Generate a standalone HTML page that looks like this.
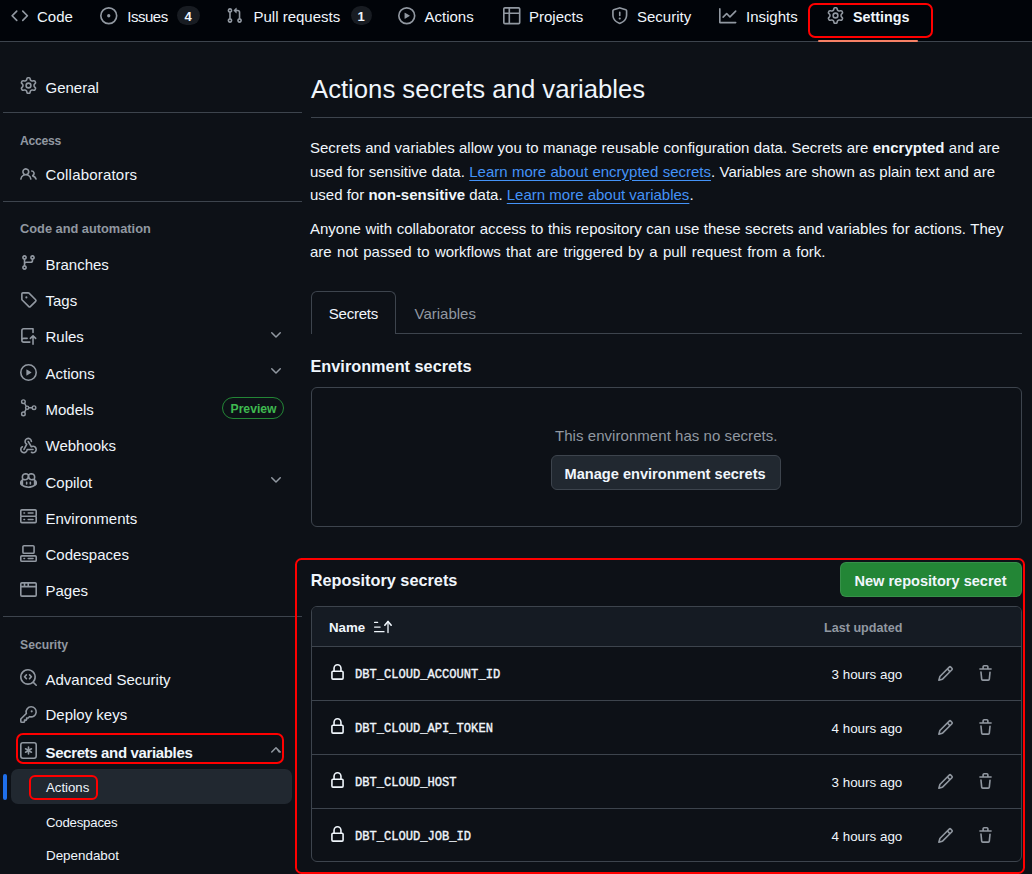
<!DOCTYPE html>
<html><head><meta charset="utf-8"><title>Actions secrets and variables</title>
<style>
html,body{margin:0;padding:0;}
body{width:1032px;height:874px;overflow:hidden;background:#0d1117;position:relative;font-family:"Liberation Sans",sans-serif;color:#f0f6fc;}
.t{position:absolute;line-height:1;white-space:nowrap;}
.t b{font-weight:700;}
.t u{text-decoration:underline;text-underline-offset:3px;text-decoration-thickness:1px;}
.i{position:absolute;overflow:visible;}
.b{position:absolute;}
</style></head><body>
<div class="b" style="left:0px;top:0px;width:1032px;height:41px;background:#010409"></div>
<div class="b" style="left:0px;top:41px;width:1032px;height:1px;background:#3d444d"></div>
<svg class="i" style="left:10.80px;top:7.00px;width:17.5px;height:17.5px;color:#9198a1;" viewBox="0 0 16 16" fill="currentColor"><path d="M4.72 3.22a.75.75 0 0 1 1.06 1.06L2.06 8l3.72 3.72a.75.75 0 1 1-1.06 1.06L.47 8.53a.75.75 0 0 1 0-1.06Zm6.56 0a.75.75 0 1 0-1.06 1.06L13.94 8l-3.72 3.72a.75.75 0 1 0 1.06 1.06l4.25-4.25a.75.75 0 0 0 0-1.06Z"/></svg>
<div class="t" style="left:37.00px;top:9.00px;font-size:15px;color:#f0f6fc;font-family:'Liberation Sans', sans-serif;">Code</div>
<svg class="i" style="left:99.80px;top:7.00px;width:17.5px;height:17.5px;color:#9198a1;" viewBox="0 0 16 16" fill="currentColor"><path d="M8 9.5a1.5 1.5 0 1 0 0-3 1.5 1.5 0 0 0 0 3Z"/><path d="M8 0a8 8 0 1 1 0 16A8 8 0 0 1 8 0ZM1.5 8a6.5 6.5 0 1 0 13 0 6.5 6.5 0 0 0-13 0Z"/></svg>
<div class="t" style="left:127.30px;top:9.00px;font-size:15px;color:#f0f6fc;font-family:'Liberation Sans', sans-serif;letter-spacing:-0.5px">Issues</div>
<div class="b" style="left:177px;top:6px;width:23px;height:19px;background:#181c22;border-radius:10px"></div>
<div class="t" style="left:184.50px;top:10.30px;font-size:13px;font-weight:700;color:#f0f6fc;font-family:'Liberation Sans', sans-serif;">4</div>
<svg class="i" style="left:225.80px;top:7.00px;width:17px;height:17px;color:#9198a1;" viewBox="0 0 16 16" fill="currentColor"><path d="M1.5 3.25a2.25 2.25 0 1 1 3 2.122v5.256a2.251 2.251 0 1 1-1.5 0V5.372A2.25 2.25 0 0 1 1.5 3.25Zm5.677-.177L9.573.677A.25.25 0 0 1 10 .854V2.5h1A2.5 2.5 0 0 1 13.5 5v5.628a2.251 2.251 0 1 1-1.5 0V5a1 1 0 0 0-1-1h-1v1.646a.25.25 0 0 1-.427.177L7.177 3.427a.25.25 0 0 1 0-.354ZM3.75 2.5a.75.75 0 1 0 0 1.5.75.75 0 0 0 0-1.5Zm0 9.5a.75.75 0 1 0 0 1.5.75.75 0 0 0 0-1.5Zm8.25.75a.75.75 0 1 0 1.5 0 .75.75 0 0 0-1.5 0Z"/></svg>
<div class="t" style="left:253.50px;top:9.00px;font-size:15px;color:#f0f6fc;font-family:'Liberation Sans', sans-serif;">Pull requests</div>
<div class="b" style="left:350.5px;top:6px;width:21px;height:19px;background:#181c22;border-radius:10px"></div>
<div class="t" style="left:357.50px;top:10.30px;font-size:13px;font-weight:700;color:#f0f6fc;font-family:'Liberation Sans', sans-serif;">1</div>
<svg class="i" style="left:397.80px;top:7.00px;width:17.5px;height:17.5px;color:#9198a1;" viewBox="0 0 16 16" fill="currentColor"><path d="M8 0a8 8 0 1 1 0 16A8 8 0 0 1 8 0ZM1.5 8a6.5 6.5 0 1 0 13 0 6.5 6.5 0 0 0-13 0Zm4.879-2.773 4.264 2.559a.25.25 0 0 1 0 .428l-4.264 2.559A.25.25 0 0 1 6 10.559V5.442a.25.25 0 0 1 .379-.215Z"/></svg>
<div class="t" style="left:424.50px;top:9.00px;font-size:15px;color:#f0f6fc;font-family:'Liberation Sans', sans-serif;">Actions</div>
<svg class="i" style="left:502.80px;top:7.00px;width:17.5px;height:17.5px;color:#9198a1;" viewBox="0 0 16 16" fill="currentColor"><path d="M0 1.75C0 .784.784 0 1.75 0h12.5C15.216 0 16 .784 16 1.75v12.5A1.75 1.75 0 0 1 14.25 16H1.75A1.75 1.75 0 0 1 0 14.25ZM6.5 6.5v8h7.75a.25.25 0 0 0 .25-.25V6.5Zm8-1.5V1.75a.25.25 0 0 0-.25-.25H6.5V5Zm-13 1.5v7.75c0 .138.112.25.25.25H5v-8ZM5 5V1.5H1.75a.25.25 0 0 0-.25.25V5Z"/></svg>
<div class="t" style="left:529.00px;top:9.00px;font-size:15px;color:#f0f6fc;font-family:'Liberation Sans', sans-serif;">Projects</div>
<svg class="i" style="left:610.80px;top:7.00px;width:17.5px;height:17.5px;color:#9198a1;" viewBox="0 0 16 16" fill="currentColor"><path d="M7.467.133a1.748 1.748 0 0 1 1.066 0l5.25 1.68A1.75 1.75 0 0 1 15 3.48V7c0 1.566-.32 3.182-1.303 4.682-.983 1.498-2.585 2.813-5.032 3.855a1.697 1.697 0 0 1-1.33 0c-2.447-1.042-4.049-2.357-5.032-3.855C1.32 10.182 1 8.566 1 7V3.48a1.755 1.755 0 0 1 1.217-1.667Zm.61 1.429a.25.25 0 0 0-.153 0l-5.25 1.68a.25.25 0 0 0-.174.238V7c0 1.358.275 2.666 1.057 3.86.784 1.194 2.121 2.34 4.366 3.297a.196.196 0 0 0 .154 0c2.245-.956 3.582-2.104 4.366-3.298C13.225 9.666 13.5 8.36 13.5 7V3.48a.251.251 0 0 0-.174-.237l-5.25-1.68ZM8.75 4.75v3a.75.75 0 0 1-1.5 0v-3a.75.75 0 0 1 1.5 0ZM9 10.5a1 1 0 1 1-2 0 1 1 0 0 1 2 0Z"/></svg>
<div class="t" style="left:637.00px;top:9.00px;font-size:15px;color:#f0f6fc;font-family:'Liberation Sans', sans-serif;">Security</div>
<svg class="i" style="left:718.80px;top:7.00px;width:17.5px;height:17.5px;color:#9198a1;" viewBox="0 0 16 16" fill="currentColor"><path d="M1.5 1.75V13.5h13.75a.75.75 0 0 1 0 1.5H.75a.75.75 0 0 1-.75-.75V1.75a.75.75 0 0 1 1.5 0Zm14.28 2.53-5.25 5.25a.75.75 0 0 1-1.06 0L7 7.06 4.28 9.78a.751.751 0 0 1-1.042-.018.751.751 0 0 1-.018-1.042l3.25-3.25a.75.75 0 0 1 1.06 0L10 7.94l4.72-4.72a.751.751 0 0 1 1.042.018.751.751 0 0 1 .018 1.042Z"/></svg>
<div class="t" style="left:746.00px;top:9.00px;font-size:15px;color:#f0f6fc;font-family:'Liberation Sans', sans-serif;">Insights</div>
<svg class="i" style="left:827.20px;top:7.20px;width:17px;height:17px;color:#9198a1;" viewBox="0 0 16 16" fill="currentColor"><path d="M8 0a8.2 8.2 0 0 1 .701.031C9.444.095 9.99.645 10.16 1.29l.288 1.107c.018.066.079.158.212.224.231.114.454.243.668.386.123.082.233.09.299.071l1.103-.303c.644-.176 1.392.021 1.82.63.27.385.506.792.704 1.218.315.675.111 1.422-.364 1.891l-.814.806c-.049.048-.098.147-.088.294.016.257.016.515 0 .772-.01.147.038.246.088.294l.814.806c.475.469.679 1.216.364 1.891a7.977 7.977 0 0 1-.704 1.217c-.428.61-1.176.807-1.82.63l-1.102-.302c-.067-.019-.177-.011-.3.071a5.909 5.909 0 0 1-.668.386c-.133.066-.194.158-.211.224l-.29 1.106c-.168.646-.715 1.196-1.458 1.26a8.006 8.006 0 0 1-1.402 0c-.743-.064-1.289-.614-1.458-1.26l-.289-1.106c-.018-.066-.079-.158-.212-.224a5.738 5.738 0 0 1-.668-.386c-.123-.082-.233-.09-.299-.071l-1.103.303c-.644.176-1.392-.021-1.82-.63a8.12 8.12 0 0 1-.704-1.218c-.315-.675-.111-1.422.363-1.891l.815-.806c.05-.048.098-.147.088-.294a6.214 6.214 0 0 1 0-.772c.01-.147-.038-.246-.088-.294l-.815-.806C.635 6.045.431 5.298.746 4.623a7.92 7.92 0 0 1 .704-1.217c.428-.61 1.176-.807 1.820-.63l1.102.302c.067.019.177.011.3-.071.214-.143.437-.272.668-.386.133-.066.194-.158.211-.224l.29-1.106C6.009.645 6.556.095 7.299.03 7.530.01 7.764 0 8 0Zm-.571 1.525c-.036.003-.108.036-.137.146l-.289 1.105c-.147.561-.549.967-.998 1.189-.173.086-.34.183-.5.29-.417.278-.97.423-1.529.27l-1.103-.303c-.109-.03-.175.016-.195.045-.22.312-.412.644-.573.99-.014.031-.021.11.059.19l.815.806c.411.406.562.957.53 1.456a4.709 4.709 0 0 0 0 .582c.032.499-.119 1.05-.53 1.456l-.815.806c-.081.08-.073.159-.059.19.162.346.353.677.573.989.02.03.085.076.195.046l1.102-.303c.56-.153 1.113-.008 1.53.27.161.107.328.204.501.29.447.222.85.629.997 1.189l.289 1.105c.029.109.101.143.137.146a6.6 6.6 0 0 0 1.142 0c.036-.003.108-.036.137-.146l.289-1.105c.147-.561.549-.967.998-1.189.173-.086.34-.183.5-.29.417-.278.97-.423 1.529-.27l1.103.303c.109.029.175-.016.195-.045.22-.313.411-.644.573-.99.014-.031.021-.11-.059-.19l-.815-.806c-.411-.406-.562-.957-.53-1.456a4.709 4.709 0 0 0 0-.582c-.032-.499.119-1.05.53-1.456l.815-.806c.081-.08.073-.159.059-.19a6.464 6.464 0 0 0-.573-.989c-.02-.03-.085-.076-.195-.046l-1.102.303c-.56.153-1.113.008-1.53-.27a4.44 4.44 0 0 0-.501-.29c-.447-.222-.85-.629-.997-1.189l-.289-1.105c-.029-.11-.101-.143-.137-.146a6.6 6.6 0 0 0-1.142 0ZM11 8a3 3 0 1 1-6 0 3 3 0 0 1 6 0ZM9.5 8a1.5 1.5 0 1 0-3.001.001A1.5 1.5 0 0 0 9.5 8Z"/></svg>
<div class="t" style="left:853.00px;top:9.60px;font-size:14.3px;font-weight:700;color:#f0f6fc;font-family:'Liberation Sans', sans-serif;">Settings</div>
<div class="b" style="left:818px;top:40px;width:100px;height:2px;background:#f78166;border-radius:1px"></div>
<div class="b" style="left:808.2px;top:3.2px;width:124.6px;height:35px;border:2.3px solid #f00;border-radius:7px;box-sizing:border-box"></div>
<svg class="i" style="left:19.70px;top:77.20px;width:17px;height:17px;color:#9198a1;" viewBox="0 0 16 16" fill="currentColor"><path d="M8 0a8.2 8.2 0 0 1 .701.031C9.444.095 9.99.645 10.16 1.29l.288 1.107c.018.066.079.158.212.224.231.114.454.243.668.386.123.082.233.09.299.071l1.103-.303c.644-.176 1.392.021 1.82.63.27.385.506.792.704 1.218.315.675.111 1.422-.364 1.891l-.814.806c-.049.048-.098.147-.088.294.016.257.016.515 0 .772-.01.147.038.246.088.294l.814.806c.475.469.679 1.216.364 1.891a7.977 7.977 0 0 1-.704 1.217c-.428.61-1.176.807-1.82.63l-1.102-.302c-.067-.019-.177-.011-.3.071a5.909 5.909 0 0 1-.668.386c-.133.066-.194.158-.211.224l-.29 1.106c-.168.646-.715 1.196-1.458 1.26a8.006 8.006 0 0 1-1.402 0c-.743-.064-1.289-.614-1.458-1.26l-.289-1.106c-.018-.066-.079-.158-.212-.224a5.738 5.738 0 0 1-.668-.386c-.123-.082-.233-.09-.299-.071l-1.103.303c-.644.176-1.392-.021-1.82-.63a8.12 8.12 0 0 1-.704-1.218c-.315-.675-.111-1.422.363-1.891l.815-.806c.05-.048.098-.147.088-.294a6.214 6.214 0 0 1 0-.772c.01-.147-.038-.246-.088-.294l-.815-.806C.635 6.045.431 5.298.746 4.623a7.92 7.92 0 0 1 .704-1.217c.428-.61 1.176-.807 1.820-.63l1.102.302c.067.019.177.011.3-.071.214-.143.437-.272.668-.386.133-.066.194-.158.211-.224l.29-1.106C6.009.645 6.556.095 7.299.03 7.530.01 7.764 0 8 0Zm-.571 1.525c-.036.003-.108.036-.137.146l-.289 1.105c-.147.561-.549.967-.998 1.189-.173.086-.34.183-.5.29-.417.278-.97.423-1.529.27l-1.103-.303c-.109-.03-.175.016-.195.045-.22.312-.412.644-.573.99-.014.031-.021.11.059.19l.815.806c.411.406.562.957.53 1.456a4.709 4.709 0 0 0 0 .582c.032.499-.119 1.05-.53 1.456l-.815.806c-.081.08-.073.159-.059.19.162.346.353.677.573.989.02.03.085.076.195.046l1.102-.303c.56-.153 1.113-.008 1.53.27.161.107.328.204.501.29.447.222.85.629.997 1.189l.289 1.105c.029.109.101.143.137.146a6.6 6.6 0 0 0 1.142 0c.036-.003.108-.036.137-.146l.289-1.105c.147-.561.549-.967.998-1.189.173-.086.34-.183.5-.29.417-.278.97-.423 1.529-.27l1.103.303c.109.029.175-.016.195-.045.22-.313.411-.644.573-.99.014-.031.021-.11-.059-.19l-.815-.806c-.411-.406-.562-.957-.53-1.456a4.709 4.709 0 0 0 0-.582c-.032-.499.119-1.05.53-1.456l.815-.806c.081-.08.073-.159.059-.19a6.464 6.464 0 0 0-.573-.989c-.02-.03-.085-.076-.195-.046l-1.102.303c-.56.153-1.113.008-1.53-.27a4.44 4.44 0 0 0-.501-.29c-.447-.222-.85-.629-.997-1.189l-.289-1.105c-.029-.11-.101-.143-.137-.146a6.6 6.6 0 0 0-1.142 0ZM11 8a3 3 0 1 1-6 0 3 3 0 0 1 6 0ZM9.5 8a1.5 1.5 0 1 0-3.001.001A1.5 1.5 0 0 0 9.5 8Z"/></svg>
<div class="t" style="left:45.50px;top:80.00px;font-size:15px;color:#f0f6fc;font-family:'Liberation Sans', sans-serif;">General</div>
<div class="b" style="left:3px;top:112px;width:299px;height:1px;background:#3d444d"></div>
<div class="t" style="left:20.00px;top:135.17px;font-size:12.2px;font-weight:700;color:#9198a1;font-family:'Liberation Sans', sans-serif;letter-spacing:-0.3px">Access</div>
<svg class="i" style="left:19.70px;top:166.00px;width:17px;height:17px;color:#9198a1;" viewBox="0 0 16 16" fill="currentColor"><path d="M2 5.5a3.5 3.5 0 1 1 5.898 2.549 5.508 5.508 0 0 1 3.034 4.084.75.75 0 1 1-1.482.235 4 4 0 0 0-7.9 0 .75.75 0 0 1-1.482-.236A5.507 5.507 0 0 1 3.102 8.05 3.493 3.493 0 0 1 2 5.5ZM11 4a3.001 3.001 0 0 1 2.22 5.018 5.01 5.01 0 0 1 2.56 3.012.749.749 0 0 1-.885.954.752.752 0 0 1-.549-.514 3.507 3.507 0 0 0-2.522-2.372.75.75 0 0 1-.574-.73v-.352a.75.75 0 0 1 .416-.672A1.5 1.5 0 0 0 11 5.5.75.75 0 0 1 11 4Zm-5.5-.5a2 2 0 1 0-.001 3.999A2 2 0 0 0 5.5 3.5Z"/></svg>
<div class="t" style="left:45.50px;top:167.00px;font-size:15px;color:#f0f6fc;font-family:'Liberation Sans', sans-serif;letter-spacing:0.2px">Collaborators</div>
<div class="b" style="left:3px;top:201px;width:299px;height:1px;background:#3d444d"></div>
<div class="t" style="left:20.00px;top:222.96px;font-size:12.8px;font-weight:700;color:#9198a1;font-family:'Liberation Sans', sans-serif;">Code and automation</div>
<svg class="i" style="left:19.70px;top:254.20px;width:17px;height:17px;color:#9198a1;" viewBox="0 0 16 16" fill="currentColor"><path d="M9.5 3.25a2.25 2.25 0 1 1 3 2.122V6A2.5 2.5 0 0 1 10 8.5H6a1 1 0 0 0-1 1v1.128a2.251 2.251 0 1 1-1.5 0V5.372a2.25 2.25 0 1 1 1.5 0v1.836A2.493 2.493 0 0 1 6 7h4a1 1 0 0 0 1-1v-.628A2.25 2.25 0 0 1 9.5 3.25Zm-6 0a.75.75 0 1 0 1.5 0 .75.75 0 0 0-1.5 0Zm8.25-.75a.75.75 0 1 0 0 1.5.75.75 0 0 0 0-1.5ZM4.25 12a.75.75 0 1 0 0 1.5.75.75 0 0 0 0-1.5Z"/></svg>
<div class="t" style="left:45.50px;top:256.70px;font-size:15px;color:#f0f6fc;font-family:'Liberation Sans', sans-serif;">Branches</div>
<svg class="i" style="left:19.70px;top:290.50px;width:17px;height:17px;color:#9198a1;" viewBox="0 0 16 16" fill="currentColor"><path d="M1 7.775V2.75C1 1.784 1.784 1 2.75 1h5.025c.464 0 .91.184 1.238.513l6.25 6.25a1.75 1.75 0 0 1 0 2.474l-5.026 5.026a1.75 1.75 0 0 1-2.474 0l-6.25-6.25A1.752 1.752 0 0 1 1 7.775Zm1.5 0c0 .066.026.13.073.177l6.25 6.25a.25.25 0 0 0 .354 0l5.025-5.025a.25.25 0 0 0 0-.354l-6.25-6.25a.25.25 0 0 0-.177-.073H2.75a.25.25 0 0 0-.25.25ZM6 5a1 1 0 1 1 0 2 1 1 0 0 1 0-2Z"/></svg>
<div class="t" style="left:45.50px;top:293.00px;font-size:15px;color:#f0f6fc;font-family:'Liberation Sans', sans-serif;">Tags</div>
<svg class="i" style="left:19.70px;top:327.50px;width:17px;height:17px;color:#9198a1;" viewBox="0 0 16 16" fill="currentColor"><path d="M1 2.5A2.5 2.5 0 0 1 3.5 0h8.75a.75.75 0 0 1 .75.75v3.5a.75.75 0 0 1-1.5 0V1.5h-8a1 1 0 0 0-1 1v6.708A2.493 2.493 0 0 1 3.5 9h3.25a.75.75 0 0 1 0 1.5H3.5a1 1 0 0 0 0 2h5.75a.75.75 0 0 1 0 1.5H3.5A2.5 2.5 0 0 1 1 11.5Zm13.23 7.79h-.001l-1.224-1.224v6.184a.75.75 0 0 1-1.5 0V9.066L10.28 10.29a.75.75 0 0 1-1.06-1.061l2.505-2.504a.75.75 0 0 1 1.06 0L15.29 9.23a.751.751 0 0 1-.018 1.042.751.751 0 0 1-1.042.018Z"/></svg>
<div class="t" style="left:45.50px;top:329.30px;font-size:15px;color:#f0f6fc;font-family:'Liberation Sans', sans-serif;">Rules</div>
<svg class="i" style="left:19.70px;top:363.50px;width:17px;height:17px;color:#9198a1;" viewBox="0 0 16 16" fill="currentColor"><path d="M8 0a8 8 0 1 1 0 16A8 8 0 0 1 8 0ZM1.5 8a6.5 6.5 0 1 0 13 0 6.5 6.5 0 0 0-13 0Zm4.879-2.773 4.264 2.559a.25.25 0 0 1 0 .428l-4.264 2.559A.25.25 0 0 1 6 10.559V5.442a.25.25 0 0 1 .379-.215Z"/></svg>
<div class="t" style="left:45.50px;top:365.60px;font-size:15px;color:#f0f6fc;font-family:'Liberation Sans', sans-serif;">Actions</div>
<svg class="i" style="left:19.70px;top:399.30px;width:17px;height:17px;color:#9198a1;" viewBox="0 0 16 16" fill="currentColor"><g fill="none" stroke="currentColor" stroke-width="1.35"><circle cx="3.2" cy="2.5" r="1.7"/><circle cx="3.2" cy="14" r="1.7"/><circle cx="13.2" cy="8.2" r="1.7"/><circle cx="6.7" cy="8.2" r="1.5"/><path d="M4.2 4 5.8 6.8M4.2 12.5 5.8 9.6M8.2 8.2h3.3"/></g></svg>
<div class="t" style="left:45.50px;top:401.90px;font-size:15px;color:#f0f6fc;font-family:'Liberation Sans', sans-serif;">Models</div>
<svg class="i" style="left:19.70px;top:437.00px;width:17px;height:17px;color:#9198a1;" viewBox="0 0 16 16" fill="currentColor"><path d="M5.5 4.25a2.25 2.25 0 0 1 4.5 0 .75.75 0 0 0 1.5 0 3.75 3.75 0 1 0-6.14 2.889l-2.272 4.258a.75.75 0 0 0 1.324.706L7 7.25a.75.75 0 0 0-.309-1.021A2.25 2.25 0 0 1 5.5 4.25Z"/><path d="M7.364 3.607a.75.75 0 0 1 1.03.257l2.608 4.349a3.75 3.75 0 1 1-.628 6.785.75.75 0 0 1 .752-1.299 2.25 2.25 0 1 0-.033-3.88.75.75 0 0 1-1.03-.256L7.107 4.636a.75.75 0 0 1 .257-1.03Z"/><path d="M2.9 8.776A.75.75 0 0 1 2.625 9.8 2.25 2.25 0 1 0 6 11.75a.75.75 0 0 1 .75-.751h5.5a.75.75 0 0 1 0 1.5H7.425a3.751 3.751 0 1 1-5.55-3.998.75.75 0 0 1 1.024.274Z"/></svg>
<div class="t" style="left:45.50px;top:438.20px;font-size:15px;color:#f0f6fc;font-family:'Liberation Sans', sans-serif;">Webhooks</div>
<svg class="i" style="left:19.70px;top:472.00px;width:17px;height:17px;color:#9198a1;" viewBox="0 0 16 16" fill="currentColor"><path d="M7.998 15.035c-4.562 0-7.873-2.914-7.998-3.749V9.338c.085-.628.677-1.686 1.588-2.065.013-.07.024-.143.036-.218.029-.183.06-.384.126-.612-.201-.508-.254-1.084-.254-1.656 0-.87.128-1.769.693-2.484.579-.733 1.494-1.124 2.724-1.261 1.206-.134 2.262.034 2.944.765.05.053.096.108.139.165.044-.057.094-.112.143-.165.682-.731 1.738-.899 2.944-.765 1.23.137 2.145.528 2.724 1.261.566.715.693 1.614.693 2.484 0 .572-.053 1.148-.254 1.656.066.228.098.429.126.612.012.076.024.148.037.218.924.385 1.522 1.471 1.591 2.095v1.872c0 .766-3.351 3.795-8.002 3.795Zm0-1.485c2.28 0 4.584-1.11 5.002-1.433V7.862l-.023-.116c-.49.21-1.075.291-1.727.291-1.146 0-2.059-.327-2.71-.991A3.222 3.222 0 0 1 8 6.303a3.24 3.240 0 0 1-.544.743c-.65.664-1.563.991-2.71.991-.652 0-1.236-.081-1.727-.291l-.023.116v4.255c.419.323 2.722 1.433 5.002 1.433ZM6.762 2.830c-.193-.206-.637-.413-1.682-.297-1.019.113-1.479.404-1.713.7-.247.312-.369.789-.369 1.554 0 .793.129 1.171.308 1.371.162.181.519.379 1.442.379.853 0 1.339-.235 1.638-.54.315-.322.527-.827.617-1.553.117-.935-.037-1.395-.241-1.614Zm4.155-.297c-1.044-.116-1.488.091-1.681.297-.204.219-.359.679-.242 1.614.091.726.303 1.231.618 1.553.299.305.784.54 1.638.54.922 0 1.280-.198 1.442-.379.179-.2.308-.578.308-1.371 0-.765-.123-1.242-.37-1.554-.233-.296-.693-.587-1.713-.7Z"/><path d="M6.250 9.037a.75.75 0 0 1 .75.75v1.501a.75.75 0 0 1-1.5 0V9.787a.75.75 0 0 1 .75-.75Zm4.250.75v1.501a.75.75 0 0 1-1.5 0V9.787a.75.75 0 0 1 1.5 0Z"/></svg>
<div class="t" style="left:45.50px;top:474.50px;font-size:15px;color:#f0f6fc;font-family:'Liberation Sans', sans-serif;">Copilot</div>
<svg class="i" style="left:19.70px;top:507.50px;width:17px;height:17px;color:#9198a1;" viewBox="0 0 16 16" fill="currentColor"><path d="M1.75 1h12.5c.966 0 1.75.784 1.75 1.75v4c0 .372-.116.717-.314 1 .198.283.314.628.314 1v4a1.75 1.75 0 0 1-1.75 1.75H1.75A1.75 1.75 0 0 1 0 12.75v-4c0-.358.109-.707.314-1a1.739 1.739 0 0 1-.314-1v-4C0 1.784.784 1 1.75 1ZM1.5 2.75v4c0 .138.112.25.25.25h12.5a.25.25 0 0 0 .25-.25v-4a.25.25 0 0 0-.25-.25H1.75a.25.25 0 0 0-.25.25Zm.25 5.75a.25.25 0 0 0-.25.25v4c0 .138.112.25.25.25h12.5a.25.25 0 0 0 .25-.25v-4a.25.25 0 0 0-.25-.25ZM7 4.75A.75.75 0 0 1 7.750 4h4.5a.75.75 0 0 1 0 1.5h-4.5A.75.75 0 0 1 7 4.75ZM7.75 10h4.5a.75.75 0 0 1 0 1.5h-4.5a.75.75 0 0 1 0-1.5ZM3 4.750A.75.75 0 0 1 3.75 4h.5a.75.75 0 0 1 0 1.5h-.5A.75.75 0 0 1 3 4.75ZM3.75 10h.5a.75.75 0 0 1 0 1.5h-.5a.75.75 0 0 1 0-1.5Z"/></svg>
<div class="t" style="left:45.50px;top:510.80px;font-size:15px;color:#f0f6fc;font-family:'Liberation Sans', sans-serif;">Environments</div>
<svg class="i" style="left:19.70px;top:544.80px;width:17px;height:17px;color:#9198a1;" viewBox="0 0 16 16" fill="currentColor"><path d="M0 11.25c0-.966.784-1.75 1.75-1.75h12.5c.966 0 1.75.784 1.75 1.75v3A1.75 1.75 0 0 1 14.25 16H1.75A1.75 1.75 0 0 1 0 14.25Zm2-9.5C2 .784 2.784 0 3.75 0h8.5C13.216 0 14 .784 14 1.75v5a1.75 1.75 0 0 1-1.75 1.75h-8.5A1.75 1.75 0 0 1 2 6.75Zm1.75-.25a.25.25 0 0 0-.25.25v5c0 .138.112.25.25.25h8.5a.25.25 0 0 0 .25-.25v-5a.25.25 0 0 0-.25-.25Zm-2 9.5a.25.25 0 0 0-.25.25v3c0 .138.112.25.25.25h12.5a.25.25 0 0 0 .25-.25v-3a.25.25 0 0 0-.25-.25Z"/><path d="M7 12.75a.75.75 0 0 1 .75-.75h4.5a.75.75 0 0 1 0 1.5h-4.5a.75.75 0 0 1-.75-.75Zm-4 0a.75.75 0 0 1 .75-.75h.5a.75.75 0 0 1 0 1.5h-.5a.75.75 0 0 1-.75-.75Z"/></svg>
<div class="t" style="left:45.50px;top:547.10px;font-size:15px;color:#f0f6fc;font-family:'Liberation Sans', sans-serif;">Codespaces</div>
<svg class="i" style="left:19.70px;top:580.70px;width:17px;height:17px;color:#9198a1;" viewBox="0 0 16 16" fill="currentColor"><path d="M0 2.75C0 1.784.784 1 1.75 1h12.5c.966 0 1.75.784 1.75 1.75v10.5A1.75 1.75 0 0 1 14.25 15H1.75A1.75 1.75 0 0 1 0 13.25ZM14.5 6h-13v7.25c0 .138.112.25.25.25h12.5a.25.25 0 0 0 .25-.25Zm-6-3.5v2h6V2.75a.25.25 0 0 0-.25-.25ZM5 2.5v2h2v-2Zm-3.25 0a.25.25 0 0 0-.25.25V4.5h2v-2Z"/></svg>
<div class="t" style="left:45.50px;top:583.40px;font-size:15px;color:#f0f6fc;font-family:'Liberation Sans', sans-serif;">Pages</div>
<svg class="i" style="left:268.00px;top:327.00px;width:16px;height:16px;color:#9198a1;" viewBox="0 0 16 16" fill="currentColor"><path d="M12.78 5.22a.749.749 0 0 1 0 1.06l-4.25 4.25a.749.749 0 0 1-1.06 0L3.22 6.28a.749.749 0 0 1 .018-1.042.749.749 0 0 1 1.042-.018L8 8.939l3.72-3.719a.749.749 0 0 1 1.06 0Z"/></svg>
<svg class="i" style="left:268.00px;top:363.30px;width:16px;height:16px;color:#9198a1;" viewBox="0 0 16 16" fill="currentColor"><path d="M12.78 5.22a.749.749 0 0 1 0 1.06l-4.25 4.25a.749.749 0 0 1-1.06 0L3.22 6.28a.749.749 0 0 1 .018-1.042.749.749 0 0 1 1.042-.018L8 8.939l3.72-3.719a.749.749 0 0 1 1.06 0Z"/></svg>
<svg class="i" style="left:268.00px;top:472.20px;width:16px;height:16px;color:#9198a1;" viewBox="0 0 16 16" fill="currentColor"><path d="M12.78 5.22a.749.749 0 0 1 0 1.06l-4.25 4.25a.749.749 0 0 1-1.06 0L3.22 6.28a.749.749 0 0 1 .018-1.042.749.749 0 0 1 1.042-.018L8 8.939l3.72-3.719a.749.749 0 0 1 1.06 0Z"/></svg>
<div class="b" style="left:221.5px;top:397px;width:62.5px;height:22px;border:1px solid #238636;border-radius:11px;box-sizing:border-box"></div>
<div class="t" style="left:230.50px;top:402.67px;font-size:12.2px;font-weight:700;color:#3fb950;font-family:'Liberation Sans', sans-serif;">Preview</div>
<div class="b" style="left:3px;top:616px;width:299px;height:1px;background:#3d444d"></div>
<div class="t" style="left:20.00px;top:639.17px;font-size:12.2px;font-weight:700;color:#9198a1;font-family:'Liberation Sans', sans-serif;">Security</div>
<svg class="i" style="left:19.70px;top:668.80px;width:17px;height:17px;color:#9198a1;" viewBox="0 0 16 16" fill="currentColor"><path d="M8.47 4.97a.75.75 0 0 1 1.06 0l1.75 1.75a.75.75 0 0 1 0 1.06l-1.75 1.75a.75.75 0 1 1-1.06-1.06l1.22-1.22-1.220-1.22a.75.75 0 0 1 0-1.06ZM6.53 6.03 5.31 7.25l1.22 1.22a.75.75 0 1 1-1.06 1.06L3.72 7.78a.75.75 0 0 1 0-1.06l1.75-1.75a.75.75 0 1 1 1.06 1.06Z"/><path d="M12.246 13.307a7.501 7.501 0 1 1 1.060-1.06l2.474 2.473a.75.75 0 1 1-1.06 1.06ZM1.5 7.5a6 6 0 1 0 12 0 6 6 0 0 0-12 0Z"/></svg>
<div class="t" style="left:45.50px;top:671.50px;font-size:15px;color:#f0f6fc;font-family:'Liberation Sans', sans-serif;">Advanced Security</div>
<svg class="i" style="left:19.70px;top:706.00px;width:17px;height:17px;color:#9198a1;" viewBox="0 0 16 16" fill="currentColor"><path d="M10.5 0a5.499 5.499 0 1 1-1.288 10.848l-.932.932a.749.749 0 0 1-.53.22H7v.75a.749.749 0 0 1-.22.53l-.5.5a.749.749 0 0 1-.53.22H5v.75a.749.749 0 0 1-.22.53l-.5.5a.749.749 0 0 1-.53.22h-2A1.75 1.75 0 0 1 0 14.25v-2c0-.199.079-.389.22-.53l4.932-4.932A5.5 5.5 0 0 1 10.5 0Zm-4 5.5c-.001.431.069.86.205 1.269a.75.75 0 0 1-.181.768L1.5 12.56v1.69c0 .138.112.25.25.25h1.69l.06-.06v-1.19a.75.75 0 0 1 .75-.75h1.19l.06-.06v-1.19a.75.75 0 0 1 .75-.75h1.19l1.023-1.025a.75.75 0 0 1 .768-.18A4 4 0 1 0 6.5 5.5ZM11 6a1 1 0 1 1 0-2 1 1 0 0 1 0 2Z"/></svg>
<div class="t" style="left:45.50px;top:707.10px;font-size:15px;color:#f0f6fc;font-family:'Liberation Sans', sans-serif;">Deploy keys</div>
<svg class="i" style="left:19.70px;top:742.40px;width:17px;height:17px;color:#9198a1;" viewBox="0 0 16 16" fill="currentColor"><path d="M0 2.75A2.75 2.75 0 0 1 2.75 0h10.5A2.75 2.75 0 0 1 16 2.75v10.5A2.75 2.75 0 0 1 13.25 16H2.75A2.75 2.75 0 0 1 0 13.25ZM2.75 1.5c-.69 0-1.25.56-1.25 1.25v10.5c0 .69.56 1.250 1.25 1.25h10.5c.69 0 1.25-.56 1.25-1.25V2.75c0-.69-.56-1.25-1.25-1.25Z"/><path d="M8 4a.75.75 0 0 1 .75.75V6.7l1.69-.975a.75.75 0 0 1 .75 1.3L9.5 8l1.69.976a.75.75 0 0 1-.75 1.298L8.75 9.3v1.951a.75.75 0 0 1-1.5 0V9.299l-1.69.976a.75.75 0 0 1-.75-1.3L6.5 8l-1.69-.975a.75.75 0 0 1 .75-1.3l1.69.976V4.75A.75.75 0 0 1 8 4Z"/></svg>
<div class="t" style="left:45.50px;top:744.50px;font-size:15px;font-weight:700;color:#f0f6fc;font-family:'Liberation Sans', sans-serif;letter-spacing:-0.35px">Secrets and variables</div>
<svg class="i" style="left:268.00px;top:742.20px;width:16px;height:16px;color:#9198a1;" viewBox="0 0 16 16" fill="currentColor"><path d="M3.22 10.53a.749.749 0 0 1 0-1.06l4.25-4.25a.749.749 0 0 1 1.06 0l4.25 4.25a.749.749 0 0 1-1.042 1.042.749.749 0 0 1-1.042.018L8 6.811 4.28 10.53a.75.75 0 0 1-1.06 0Z"/></svg>
<div class="b" style="left:15.5px;top:733px;width:268px;height:31px;border:2.3px solid #f00;border-radius:7px;box-sizing:border-box"></div>
<div class="b" style="left:11px;top:769px;width:281px;height:35px;background:#212830;border-radius:7px"></div>
<div class="b" style="left:3px;top:774px;width:4px;height:26px;background:#1f6feb;border-radius:2px"></div>
<div class="t" style="left:46.00px;top:781.13px;font-size:13.2px;color:#f0f6fc;font-family:'Liberation Sans', sans-serif;">Actions</div>
<div class="b" style="left:28.5px;top:774.5px;width:69px;height:25.5px;border:2.3px solid #f00;border-radius:6px;box-sizing:border-box"></div>
<div class="t" style="left:46.00px;top:816.03px;font-size:13.2px;color:#f0f6fc;font-family:'Liberation Sans', sans-serif;letter-spacing:-0.2px">Codespaces</div>
<div class="t" style="left:46.00px;top:849.16px;font-size:13.4px;color:#f0f6fc;font-family:'Liberation Sans', sans-serif;">Dependabot</div>
<div class="t" style="left:311.00px;top:77.24px;font-size:25.7px;color:#f0f6fc;font-family:'Liberation Sans', sans-serif;">Actions secrets and variables</div>
<div class="b" style="left:311px;top:117px;width:721px;height:1px;background:#3d444d"></div>
<div class="t" style="left:310.00px;top:140.00px;font-size:15px;color:#f0f6fc;font-family:'Liberation Sans', sans-serif;word-spacing:0.2px">Secrets and variables allow you to manage reusable configuration data. Secrets are <b>encrypted</b> and are</div>
<div class="t" style="left:310.00px;top:163.50px;font-size:15px;color:#f0f6fc;font-family:'Liberation Sans', sans-serif;word-spacing:0.2px">used for sensitive data. <u style="color:#4493f8">Learn more about encrypted secrets</u>. Variables are shown as plain text and are</div>
<div class="t" style="left:310.00px;top:187.10px;font-size:15px;color:#f0f6fc;font-family:'Liberation Sans', sans-serif;word-spacing:0px">used for <b>non-sensitive</b> data. <u style="color:#4493f8">Learn more about variables</u>.</div>
<div class="t" style="left:310.00px;top:221.10px;font-size:15px;color:#f0f6fc;font-family:'Liberation Sans', sans-serif;word-spacing:0.4px">Anyone with collaborator access to this repository can use these secrets and variables for actions. They</div>
<div class="t" style="left:310.00px;top:244.10px;font-size:15px;color:#f0f6fc;font-family:'Liberation Sans', sans-serif;word-spacing:1.2px">are not passed to workflows that are triggered by a pull request from a fork.</div>
<div class="b" style="left:311px;top:291px;width:85px;height:43px;border:1px solid #3d444d;border-bottom:none;border-radius:6px 6px 0 0;box-sizing:border-box;background:#0d1117"></div>
<div class="b" style="left:396px;top:332.5px;width:626px;height:1px;background:#3d444d"></div>
<div class="t" style="left:328.80px;top:306.10px;font-size:15px;color:#f0f6fc;font-family:'Liberation Sans', sans-serif;letter-spacing:-0.25px">Secrets</div>
<div class="t" style="left:414.50px;top:306.20px;font-size:15px;color:#9198a1;font-family:'Liberation Sans', sans-serif;">Variables</div>
<div class="t" style="left:310.50px;top:357.50px;font-size:16.3px;font-weight:700;color:#f0f6fc;font-family:'Liberation Sans', sans-serif;">Environment secrets</div>
<div class="b" style="left:311px;top:387px;width:711px;height:140px;border:1px solid #3d444d;border-radius:6px;box-sizing:border-box"></div>
<div class="t" style="left:555.00px;top:428.30px;font-size:15px;color:#9198a1;font-family:'Liberation Sans', sans-serif;letter-spacing:0.05px">This environment has no secrets.</div>
<div class="b" style="left:551px;top:455px;width:230px;height:35px;background:#212830;border:1px solid #3d444d;border-radius:6px;box-sizing:border-box"></div>
<div class="t" style="left:564.50px;top:466.94px;font-size:14.6px;font-weight:700;color:#f0f6fc;font-family:'Liberation Sans', sans-serif;">Manage environment secrets</div>
<div class="t" style="left:310.80px;top:571.50px;font-size:16.3px;font-weight:700;color:#f0f6fc;font-family:'Liberation Sans', sans-serif;">Repository secrets</div>
<div class="b" style="left:840px;top:562px;width:182px;height:35px;background:#238636;border:1px solid rgba(240,246,252,0.1);border-radius:6px;box-sizing:border-box"></div>
<div class="t" style="left:854.50px;top:573.78px;font-size:14.55px;font-weight:700;color:#f0f6fc;font-family:'Liberation Sans', sans-serif;">New repository secret</div>
<div class="b" style="left:311px;top:606px;width:711px;height:256px;border:1px solid #3d444d;border-radius:6px;box-sizing:border-box;overflow:hidden"></div>
<div class="b" style="left:312px;top:607px;width:709px;height:39px;background:#151b23;border-radius:5px 5px 0 0"></div>
<div class="b" style="left:312px;top:646px;width:709px;height:1px;background:#3d444d"></div>
<div class="t" style="left:329.00px;top:620.74px;font-size:13.3px;font-weight:700;color:#f0f6fc;font-family:'Liberation Sans', sans-serif;">Name</div>
<svg class="i" style="left:370px;top:615px;width:26px;height:22px" viewBox="370 615 26 22" fill="none" stroke="#f0f6fc" stroke-width="1.3" stroke-linecap="round"><path d="M374.6 622.4h3M374.6 627.1h5.5M374.6 631.7h9.4"/><path d="M388 632.6V621.6"/><path d="M384.8 625.2 388 621.4 391.2 625.2" stroke-width="1.6" stroke-linejoin="round"/></svg>
<div class="t" style="left:824.00px;top:621.53px;font-size:12.6px;font-weight:700;color:#9198a1;font-family:'Liberation Sans', sans-serif;">Last updated</div>
<svg class="i" style="left:328.80px;top:664.00px;width:17px;height:17px;color:#f0f6fc;" viewBox="0 0 16 16" fill="currentColor"><path d="M4 4a4 4 0 0 1 8 0v2h.25c.966 0 1.75.784 1.75 1.75v5.5A1.75 1.75 0 0 1 12.25 15h-8.5A1.75 1.75 0 0 1 2 13.25v-5.5C2 6.784 2.784 6 3.75 6H4Zm8.25 3.5h-8.5a.25.25 0 0 0-.25.25v5.5c0 .138.112.25.25.25h8.5a.25.25 0 0 0 .25-.25v-5.5a.25.25 0 0 0-.25-.25ZM10.5 6V4a2.5 2.5 0 1 0-5 0v2Z"/></svg>
<div class="t" style="left:355.00px;top:668.73px;font-size:12.1px;color:#f0f6fc;font-family:'Liberation Mono', monospace;-webkit-text-stroke:0.35px #f0f6fc">DBT_CLOUD_ACCOUNT_ID</div>
<div class="t" style="left:902.30px;top:667.66px;font-size:13.4px;color:#f0f6fc;font-family:'Liberation Sans', sans-serif;transform:translateX(-100%)">3 hours ago</div>
<svg class="i" style="left:937.00px;top:665.00px;width:17px;height:17px;color:#9198a1;" viewBox="0 0 16 16" fill="currentColor"><path d="M11.013 1.427a1.75 1.75 0 0 1 2.474 0l1.086 1.086a1.75 1.75 0 0 1 0 2.474l-8.61 8.61c-.21.21-.47.364-.756.445l-3.251.93a.75.75 0 0 1-.927-.928l.929-3.25c.081-.286.235-.547.445-.758l8.61-8.61Zm.176 4.823L9.75 4.81l-6.286 6.287a.253.253 0 0 0-.064.108l-.558 1.953 1.953-.558a.253.253 0 0 0 .108-.064Zm1.238-3.763a.25.25 0 0 0-.354 0L10.811 3.75l1.439 1.44 1.263-1.263a.25.25 0 0 0 0-.354Z"/></svg>
<svg class="i" style="left:977.00px;top:665.00px;width:17px;height:17px;color:#9198a1;" viewBox="0 0 16 16" fill="currentColor"><path d="M11 1.75V3h2.25a.75.75 0 0 1 0 1.5H2.75a.75.75 0 0 1 0-1.5H5V1.75C5 .784 5.784 0 6.75 0h2.5C10.216 0 11 .784 11 1.75ZM4.496 6.675l.66 6.6a.25.25 0 0 0 .249.225h5.19a.25.25 0 0 0 .249-.225l.66-6.6a.75.75 0 0 1 1.492.149l-.66 6.6A1.748 1.748 0 0 1 10.595 15h-5.19a1.75 1.75 0 0 1-1.741-1.575l-.66-6.6a.75.75 0 1 1 1.492-.15ZM6.5 1.75V3h3V1.75a.25.25 0 0 0-.25-.25h-2.5a.25.25 0 0 0-.25.25Z"/></svg>
<div class="b" style="left:312px;top:700px;width:709px;height:1px;background:#3d444d"></div>
<svg class="i" style="left:328.80px;top:718.00px;width:17px;height:17px;color:#f0f6fc;" viewBox="0 0 16 16" fill="currentColor"><path d="M4 4a4 4 0 0 1 8 0v2h.25c.966 0 1.75.784 1.75 1.75v5.5A1.75 1.75 0 0 1 12.25 15h-8.5A1.75 1.75 0 0 1 2 13.25v-5.5C2 6.784 2.784 6 3.75 6H4Zm8.25 3.5h-8.5a.25.25 0 0 0-.25.25v5.5c0 .138.112.25.25.25h8.5a.25.25 0 0 0 .25-.25v-5.5a.25.25 0 0 0-.25-.25ZM10.5 6V4a2.5 2.5 0 1 0-5 0v2Z"/></svg>
<div class="t" style="left:355.00px;top:722.73px;font-size:12.1px;color:#f0f6fc;font-family:'Liberation Mono', monospace;-webkit-text-stroke:0.35px #f0f6fc">DBT_CLOUD_API_TOKEN</div>
<div class="t" style="left:902.30px;top:721.66px;font-size:13.4px;color:#f0f6fc;font-family:'Liberation Sans', sans-serif;transform:translateX(-100%)">4 hours ago</div>
<svg class="i" style="left:937.00px;top:719.00px;width:17px;height:17px;color:#9198a1;" viewBox="0 0 16 16" fill="currentColor"><path d="M11.013 1.427a1.75 1.75 0 0 1 2.474 0l1.086 1.086a1.75 1.75 0 0 1 0 2.474l-8.61 8.61c-.21.21-.47.364-.756.445l-3.251.93a.75.75 0 0 1-.927-.928l.929-3.25c.081-.286.235-.547.445-.758l8.61-8.61Zm.176 4.823L9.75 4.81l-6.286 6.287a.253.253 0 0 0-.064.108l-.558 1.953 1.953-.558a.253.253 0 0 0 .108-.064Zm1.238-3.763a.25.25 0 0 0-.354 0L10.811 3.75l1.439 1.44 1.263-1.263a.25.25 0 0 0 0-.354Z"/></svg>
<svg class="i" style="left:977.00px;top:719.00px;width:17px;height:17px;color:#9198a1;" viewBox="0 0 16 16" fill="currentColor"><path d="M11 1.75V3h2.25a.75.75 0 0 1 0 1.5H2.75a.75.75 0 0 1 0-1.5H5V1.75C5 .784 5.784 0 6.75 0h2.5C10.216 0 11 .784 11 1.75ZM4.496 6.675l.66 6.6a.25.25 0 0 0 .249.225h5.19a.25.25 0 0 0 .249-.225l.66-6.6a.75.75 0 0 1 1.492.149l-.66 6.6A1.748 1.748 0 0 1 10.595 15h-5.19a1.75 1.75 0 0 1-1.741-1.575l-.66-6.6a.75.75 0 1 1 1.492-.15ZM6.5 1.75V3h3V1.75a.25.25 0 0 0-.25-.25h-2.5a.25.25 0 0 0-.25.25Z"/></svg>
<div class="b" style="left:312px;top:754px;width:709px;height:1px;background:#3d444d"></div>
<svg class="i" style="left:328.80px;top:772.00px;width:17px;height:17px;color:#f0f6fc;" viewBox="0 0 16 16" fill="currentColor"><path d="M4 4a4 4 0 0 1 8 0v2h.25c.966 0 1.75.784 1.75 1.75v5.5A1.75 1.75 0 0 1 12.25 15h-8.5A1.75 1.75 0 0 1 2 13.25v-5.5C2 6.784 2.784 6 3.75 6H4Zm8.25 3.5h-8.5a.25.25 0 0 0-.25.25v5.5c0 .138.112.25.25.25h8.5a.25.25 0 0 0 .25-.25v-5.5a.25.25 0 0 0-.25-.25ZM10.5 6V4a2.5 2.5 0 1 0-5 0v2Z"/></svg>
<div class="t" style="left:355.00px;top:776.73px;font-size:12.1px;color:#f0f6fc;font-family:'Liberation Mono', monospace;-webkit-text-stroke:0.35px #f0f6fc">DBT_CLOUD_HOST</div>
<div class="t" style="left:902.30px;top:775.66px;font-size:13.4px;color:#f0f6fc;font-family:'Liberation Sans', sans-serif;transform:translateX(-100%)">3 hours ago</div>
<svg class="i" style="left:937.00px;top:773.00px;width:17px;height:17px;color:#9198a1;" viewBox="0 0 16 16" fill="currentColor"><path d="M11.013 1.427a1.75 1.75 0 0 1 2.474 0l1.086 1.086a1.75 1.75 0 0 1 0 2.474l-8.61 8.61c-.21.21-.47.364-.756.445l-3.251.93a.75.75 0 0 1-.927-.928l.929-3.25c.081-.286.235-.547.445-.758l8.61-8.61Zm.176 4.823L9.75 4.81l-6.286 6.287a.253.253 0 0 0-.064.108l-.558 1.953 1.953-.558a.253.253 0 0 0 .108-.064Zm1.238-3.763a.25.25 0 0 0-.354 0L10.811 3.75l1.439 1.44 1.263-1.263a.25.25 0 0 0 0-.354Z"/></svg>
<svg class="i" style="left:977.00px;top:773.00px;width:17px;height:17px;color:#9198a1;" viewBox="0 0 16 16" fill="currentColor"><path d="M11 1.75V3h2.25a.75.75 0 0 1 0 1.5H2.75a.75.75 0 0 1 0-1.5H5V1.75C5 .784 5.784 0 6.75 0h2.5C10.216 0 11 .784 11 1.75ZM4.496 6.675l.66 6.6a.25.25 0 0 0 .249.225h5.19a.25.25 0 0 0 .249-.225l.66-6.6a.75.75 0 0 1 1.492.149l-.66 6.6A1.748 1.748 0 0 1 10.595 15h-5.19a1.75 1.75 0 0 1-1.741-1.575l-.66-6.6a.75.75 0 1 1 1.492-.15ZM6.5 1.75V3h3V1.75a.25.25 0 0 0-.25-.25h-2.5a.25.25 0 0 0-.25.25Z"/></svg>
<div class="b" style="left:312px;top:808px;width:709px;height:1px;background:#3d444d"></div>
<svg class="i" style="left:328.80px;top:826.00px;width:17px;height:17px;color:#f0f6fc;" viewBox="0 0 16 16" fill="currentColor"><path d="M4 4a4 4 0 0 1 8 0v2h.25c.966 0 1.75.784 1.75 1.75v5.5A1.75 1.75 0 0 1 12.25 15h-8.5A1.75 1.75 0 0 1 2 13.25v-5.5C2 6.784 2.784 6 3.75 6H4Zm8.25 3.5h-8.5a.25.25 0 0 0-.25.25v5.5c0 .138.112.25.25.25h8.5a.25.25 0 0 0 .25-.25v-5.5a.25.25 0 0 0-.25-.25ZM10.5 6V4a2.5 2.5 0 1 0-5 0v2Z"/></svg>
<div class="t" style="left:355.00px;top:830.73px;font-size:12.1px;color:#f0f6fc;font-family:'Liberation Mono', monospace;-webkit-text-stroke:0.35px #f0f6fc">DBT_CLOUD_JOB_ID</div>
<div class="t" style="left:902.30px;top:829.66px;font-size:13.4px;color:#f0f6fc;font-family:'Liberation Sans', sans-serif;transform:translateX(-100%)">4 hours ago</div>
<svg class="i" style="left:937.00px;top:827.00px;width:17px;height:17px;color:#9198a1;" viewBox="0 0 16 16" fill="currentColor"><path d="M11.013 1.427a1.75 1.75 0 0 1 2.474 0l1.086 1.086a1.75 1.75 0 0 1 0 2.474l-8.61 8.61c-.21.21-.47.364-.756.445l-3.251.93a.75.75 0 0 1-.927-.928l.929-3.25c.081-.286.235-.547.445-.758l8.61-8.61Zm.176 4.823L9.75 4.81l-6.286 6.287a.253.253 0 0 0-.064.108l-.558 1.953 1.953-.558a.253.253 0 0 0 .108-.064Zm1.238-3.763a.25.25 0 0 0-.354 0L10.811 3.75l1.439 1.44 1.263-1.263a.25.25 0 0 0 0-.354Z"/></svg>
<svg class="i" style="left:977.00px;top:827.00px;width:17px;height:17px;color:#9198a1;" viewBox="0 0 16 16" fill="currentColor"><path d="M11 1.75V3h2.25a.75.75 0 0 1 0 1.5H2.75a.75.75 0 0 1 0-1.5H5V1.75C5 .784 5.784 0 6.75 0h2.5C10.216 0 11 .784 11 1.75ZM4.496 6.675l.66 6.6a.25.25 0 0 0 .249.225h5.19a.25.25 0 0 0 .249-.225l.66-6.6a.75.75 0 0 1 1.492.149l-.66 6.6A1.748 1.748 0 0 1 10.595 15h-5.19a1.75 1.75 0 0 1-1.741-1.575l-.66-6.6a.75.75 0 1 1 1.492-.15ZM6.5 1.75V3h3V1.75a.25.25 0 0 0-.25-.25h-2.5a.25.25 0 0 0-.25.25Z"/></svg>
<div class="b" style="left:295.3px;top:558.2px;width:729.3px;height:315.5px;border:2.5px solid #f00;border-radius:6.5px;box-sizing:border-box"></div>
</body></html>
